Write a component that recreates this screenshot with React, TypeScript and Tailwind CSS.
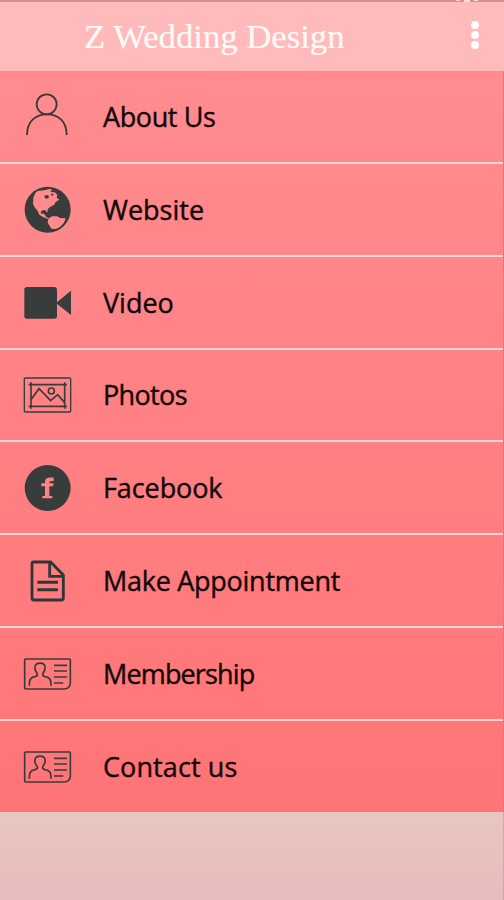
import React from 'react';

const INK = '#383c3b';

const UserIcon = () => (
  <svg viewBox="0 -11 240 240" className="w-20 h-20" fill="none" stroke={INK} strokeWidth="5.5">
    <circle cx="110" cy="74" r="30" />
    <path d="M51 166C51 124 78 104 111 104S170 124 170 166" />
  </svg>
);

const GlobeIcon = () => (
  <svg viewBox="0 -10 240 240" className="w-20 h-20">
    <circle cx="113" cy="112" r="69" fill={INK} />
    <path
      d="M83 56L103 54L121 49L126 54L120 59L134 60L142 67L140 76L148 82L137 89L132 98L121 103L113 111L112 121L105 113L94 115L92 123L103 125L109 134L118 138L112 139L99 134L88 127L83 116L74 105L69 95L70 76L76 62Z"
      fill="#ff8b8f"
    />
    <path d="M103 70L112 68L117 72L115 78L106 79ZM123 64L131 64L130 69L124 70Z" fill={INK} />
    <path d="M115 139L126 132L141 132L150 137L167 138L162 151L151 163L138 170L124 169L119 160L113 151Z" fill="#ff8b8f" />
  </svg>
);

const VideoIcon = () => (
  <svg viewBox="0 -10 240 240" className="w-20 h-20" fill={INK}>
    <rect x="43" y="65" width="98" height="95" rx="8" />
    <path d="M138 113L183 76V149Z" />
  </svg>
);

const PhotoIcon = () => (
  <svg viewBox="0 -11 240 240" className="w-20 h-20" fill="none" stroke={INK} strokeWidth="5">
    <rect x="43" y="58" width="139" height="102" rx="3" strokeWidth="4" />
    <path d="M56 78H171M56 143H171M63 71V150M164 71V150" />
    <path d="M64 122L87 90L122 126L143 108L164 132" />
    <circle cx="124" cy="97" r="9" />
  </svg>
);

const FacebookIcon = () => (
  <svg viewBox="0 -8 240 240" className="w-20 h-20">
    <circle cx="113" cy="112" r="69" fill={INK} />
    <path
      d="M97 143V136H105V107H94V98H105V94C105 82 114 79 131 81V91H125C119 91 118 94 118 98H131L129 107H118V136H127V143Z"
      fill="#ff8286"
    />
  </svg>
);

const DocumentIcon = () => (
  <svg viewBox="0 -4 240 240" className="w-20 h-20" fill="none" stroke="#2c3737" strokeWidth="8.5">
    <path d="M71 59H122L160 98V167Q160 173 154 173H72Q66 173 66 167V64Q66 59 71 59Z" strokeLinejoin="round" />
    <path d="M119 60V102H159" />
    <path d="M82 120H144M82 142H144" strokeWidth="9" />
  </svg>
);

const CardIcon = () => (
  <svg viewBox="0 -4 240 240" className="w-20 h-20" fill="none" stroke={INK} strokeWidth="5">
    <path d="M47 71H178Q181 71 181 74V143Q180 159 164 161H47Q44 161 44 158V74Q44 71 47 71Z" />
    <path d="M58 151C58 131 62 127 75 124C83 122 84 118 80 112C74 104 74 97 75 93C78 80 103 80 105 93C106 98 106 104 100 112C96 118 98 122 105 124C119 127 123 131 123 151" />
    <path d="M132 90H171M132 107H171M132 125H171M132 143H160" />
  </svg>
);

const MENU = [
  { label: 'About Us', icon: UserIcon, tracking: 'tracking-[-0.4px]' },
  { label: 'Website', icon: GlobeIcon, tracking: 'tracking-[0px]' },
  { label: 'Video', icon: VideoIcon, tracking: 'tracking-[0px]' },
  { label: 'Photos', icon: PhotoIcon, tracking: 'tracking-[-0.65px]' },
  { label: 'Facebook', icon: FacebookIcon, tracking: 'tracking-[-0.1px]' },
  { label: 'Make Appointment', icon: DocumentIcon, tracking: 'tracking-[-0.27px]' },
  { label: 'Membership', icon: CardIcon, tracking: 'tracking-[-0.85px]' },
  { label: 'Contact us', icon: CardIcon, tracking: 'tracking-[0.1px]' },
];

export default function App() {
  return (
    <div className="relative w-full h-[900px] flex flex-col overflow-hidden bg-[#e8bfc0]">
      <header className="h-[70.8px] shrink-0 flex items-center justify-between border-t-2 border-[#d58f92] bg-[#ffbabb] pl-[84px] pr-[25px]">
        <h1 className="font-['Liberation_Serif',serif] text-[34.7px] leading-none text-[#fffaf5] whitespace-nowrap pt-px [-webkit-text-stroke:0.2px_#fffaf5]">
          Z Wedding Design
        </h1>
        <button className="flex flex-col gap-[2px] -mt-[3px]" aria-label="Menu">
          <span className="w-2 h-2 rounded-full bg-white" />
          <span className="w-2 h-2 rounded-full bg-white" />
          <span className="w-2 h-2 rounded-full bg-white" />
        </button>
      </header>

      {/* tail of the status bar glyphs above the header */}
      <div className="absolute top-0 right-[26px] flex gap-1">
        <span className="w-1 h-px bg-[#f3cfd0]" />
        <span className="w-1.5 h-0.5 bg-[#f7dcdc]" />
        <span className="w-1 h-px bg-[#f7dcdc]" />
      </div>

      <nav className="h-[741.2px] shrink-0 flex flex-col bg-linear-to-b from-[#ff8c90] to-[#ff7476] border-r border-[#e5757a]">
        {MENU.map(({ label, icon: Icon, tracking }) => (
          <a
            key={label}
            className="flex-1 flex items-center border-b-2 border-[#ffd6d6] last:border-b-0 pl-[10px] gap-[13px]"
          >
            <Icon />
            <span className={`font-['Open_Sans',sans-serif] text-[27px] leading-none text-[#120708] whitespace-nowrap [-webkit-text-stroke:0.4px_#120708] ${tracking}`}>
              {label}
            </span>
          </a>
        ))}
      </nav>

      <div className="flex-1 bg-linear-to-b from-[#e8c6c1] to-[#e8bbbc] border-r border-[#d0aaab]" />
    </div>
  );
}
